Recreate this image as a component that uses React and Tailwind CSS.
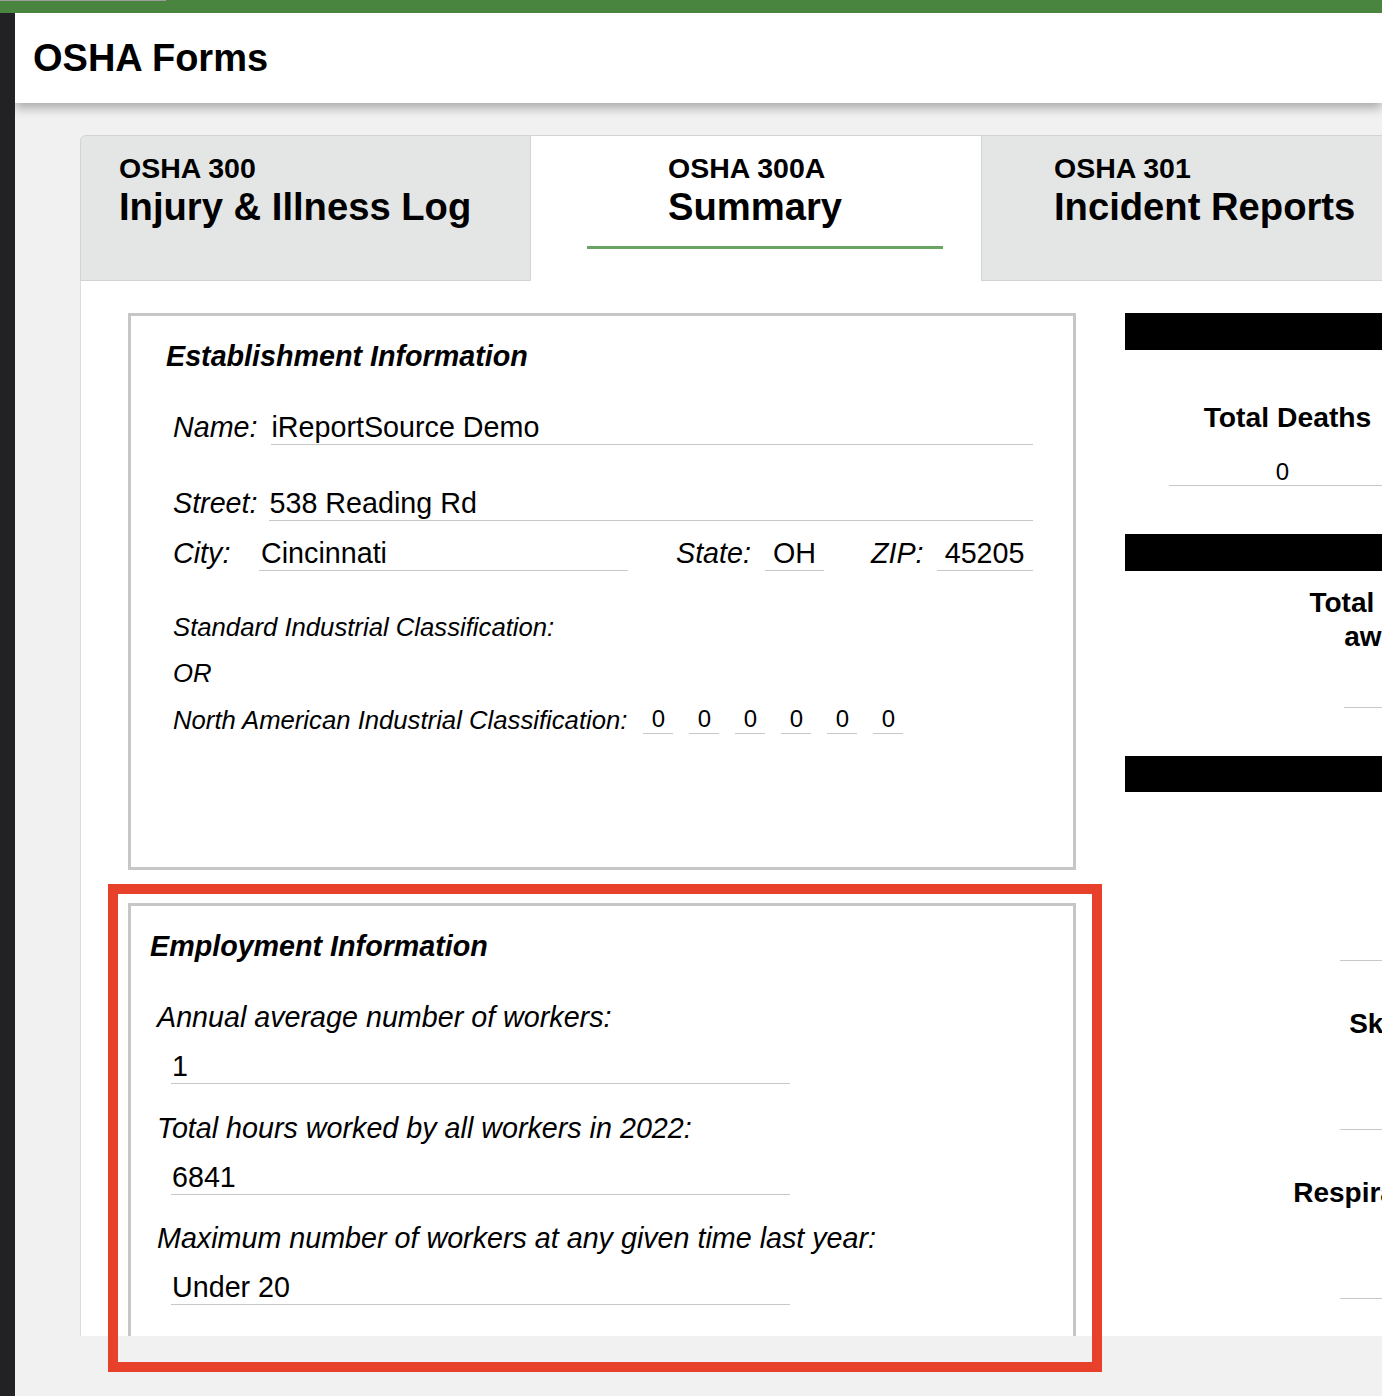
import React from "react";

const Field = ({ value, className = "" }) => (
  <div className={`h-[34px] leading-[32px] border-b border-[#c8c8c8] ${className}`}>{value}</div>
);

const Tab = ({ code, title, active, className = "" }) => (
  <div
    className={`w-[451px] h-[146px] pt-[16px] ${
      active ? "bg-white border-t border-[#d3d3d3]" : "bg-[#e4e5e5] border border-[#d3d3d3]"
    } ${className}`}
  >
    <div className="text-[28.5px] leading-[32px] font-bold">{code}</div>
    <div className="mt-[2px] text-[38.2px] leading-[42px] font-bold whitespace-nowrap">{title}</div>
  </div>
);

const TypeItem = ({ label }) => (
  <div className="h-[169px] pt-[47px] flex flex-col items-center">
    <div className="text-[28px] leading-[32px] font-bold whitespace-nowrap">{label}</div>
    <div className="flex-1" />
    <div className="w-[216px] border-b border-[#c8c8c8]" />
  </div>
);

export default function App() {
  const naics = ["0", "0", "0", "0", "0", "0"];

  return (
    <div className="relative w-[1382px] h-[1396px] overflow-hidden bg-[#f1f1f1] text-black font-['Liberation_Sans',Arial,Helvetica,sans-serif]">
      {/* top strip */}
      <div className="h-[13px] bg-[#4a853f]">
        <div className="w-[166px] h-[1px] bg-[#9c9c9c]" />
      </div>

      <div className="flex h-[1383px]">
        <div className="w-[15px] shrink-0 bg-[#222224]" />

        <div className="flex-1 min-w-0 flex flex-col overflow-hidden">
          <header className="relative z-10 h-[90px] shrink-0 bg-white pl-[18px] pt-[24px] shadow-[0_5px_10px_rgba(0,0,0,0.3)]">
            <h1 className="text-[38px] leading-[42px] font-bold">OSHA Forms</h1>
          </header>

          <div className="pl-[65px] pt-[32px]">
            <div className="w-[1500px]">
              {/* tabs */}
              <div className="flex">
                <Tab code="OSHA 300" title="Injury & Illness Log" className="pl-[38px] rounded-tl-[6px]" />
                <div className="w-[451px] h-[146px] bg-white border-t border-[#d3d3d3] pt-[16px]">
                  <div className="pl-[137px]">
                    <div className="text-[28.5px] leading-[32px] font-bold">OSHA 300A</div>
                    <div className="mt-[2px] text-[38.2px] leading-[42px] font-bold">Summary</div>
                  </div>
                  <div className="mt-[18px] ml-[56px] w-[356px] h-[3px] bg-[#6aa463]" />
                </div>
                <Tab code="OSHA 301" title="Incident Reports" className="pl-[72px] -ml-[1px]" />
              </div>

              {/* form panel */}
              <div className="-mt-[1px] h-[1056px] bg-white border-l border-[#dcdcdc] pl-[47px] pt-[33px] overflow-hidden flex">
                <div className="w-[948px] shrink-0">
                  {/* establishment */}
                  <div className="h-[557px] border-[3px] border-[#c6c6c6] pt-[24px]">
                    <h2 className="ml-[35px] text-[28.7px] leading-[32px] font-bold italic">Establishment Information</h2>
                    <div className="ml-[42px] w-[860px] text-[28.7px]">
                      <div className="mt-[39px] flex items-start">
                        <span className="italic leading-[32px]">Name:</span>
                        <Field value="iReportSource Demo" className="ml-[13px] flex-1 pl-[1px]" />
                      </div>
                      <div className="mt-[42px] flex items-start">
                        <span className="italic leading-[32px]">Street:</span>
                        <Field value="538 Reading Rd" className="ml-[11px] flex-1 pl-[1px]" />
                      </div>
                      <div className="mt-[16px] flex items-start">
                        <span className="w-[86px] italic leading-[32px]">City:</span>
                        <Field value="Cincinnati" className="w-[369px] pl-[2px]" />
                        <span className="ml-[48px] italic leading-[32px]">State:</span>
                        <Field value="OH" className="ml-[14px] w-[59px] text-center" />
                        <span className="ml-[47px] italic leading-[32px]">ZIP:</span>
                        <Field value="45205" className="ml-[13px] w-[96px] text-center" />
                      </div>
                    </div>
                    <div className="ml-[42px] text-[25.7px] leading-[30px] italic">
                      <div className="mt-[41px]">Standard Industrial Classification:</div>
                      <div className="mt-[16px]">OR</div>
                      <div className="mt-[17px] flex items-start">
                        <span>North American Industrial Classification:</span>
                        <div className="ml-[16px] flex gap-[16px] not-italic text-[24px]">
                          {naics.map((d, i) => (
                            <div key={i} className="w-[30px] h-[29px] leading-[28px] text-center border-b border-[#c8c8c8]">
                              {d}
                            </div>
                          ))}
                        </div>
                      </div>
                    </div>
                  </div>

                  {/* employment */}
                  <div className="mt-[33px] h-[500px] border-[3px] border-[#c6c6c6] pt-[24px] text-[28.7px]">
                    <h2 className="ml-[19px] leading-[32px] font-bold italic">Employment Information</h2>
                    <div className="mt-[39px] ml-[26px] italic leading-[32px]">Annual average number of workers:</div>
                    <Field value="1" className="mt-[17px] ml-[40px] w-[619px] pl-[1px]" />
                    <div className="mt-[28px] ml-[26px] italic leading-[32px]">Total hours worked by all workers in 2022:</div>
                    <Field value="6841" className="mt-[17px] ml-[40px] w-[619px] pl-[1px]" />
                    <div className="mt-[27px] ml-[26px] italic leading-[32px]">Maximum number of workers at any given time last year:</div>
                    <Field value="Under 20" className="mt-[17px] ml-[40px] w-[619px] pl-[1px]" />
                  </div>
                </div>

                {/* case totals */}
                <div className="ml-[49px] w-[650px] shrink-0">
                  <div className="h-[37px] bg-black" />
                  <div className="grid grid-cols-2">
                    <div className="pt-[51px] flex flex-col items-center">
                      <div className="text-[28.3px] leading-[32px] font-bold">Total Deaths</div>
                      <div className="mt-[25px] w-[238px] h-[28px] leading-[27px] text-center text-[24px] border-b border-[#c8c8c8]">
                        <span className="-ml-[10px]">0</span>
                      </div>
                    </div>
                    <div className="pt-[51px] flex flex-col items-center">
                      <div className="text-[28.3px] leading-[32px] font-bold">Total Days Away</div>
                      <div className="mt-[25px] w-[238px] h-[28px] leading-[27px] text-center text-[24px] border-b border-[#c8c8c8]">0</div>
                    </div>
                  </div>

                  <div className="mt-[48px] h-[37px] bg-black" />
                  <div className="w-[650px] pt-[15px] flex flex-col items-center">
                    <div className="text-[28px] leading-[34px] font-bold text-center whitespace-nowrap">
                      Total number of days
                      <br />
                      away from work
                    </div>
                    <div className="w-[212px] h-[54px] border-b border-[#c8c8c8]" />
                  </div>

                  <div className="mt-[48px] h-[36px] bg-black" />
                  <div className="w-[646px]">
                    <TypeItem label="Injuries" />
                    <TypeItem label="Skin Disorders" />
                    <TypeItem label="Respiratory Conditions" />
                    <TypeItem label="Poisonings" />
                  </div>
                </div>
              </div>
            </div>
          </div>
        </div>
      </div>

      {/* highlight frame */}
      <div className="absolute left-[108px] top-[884px] w-[994px] h-[488px] border-[10px] border-[#e8412b] pointer-events-none" />
    </div>
  );
}
